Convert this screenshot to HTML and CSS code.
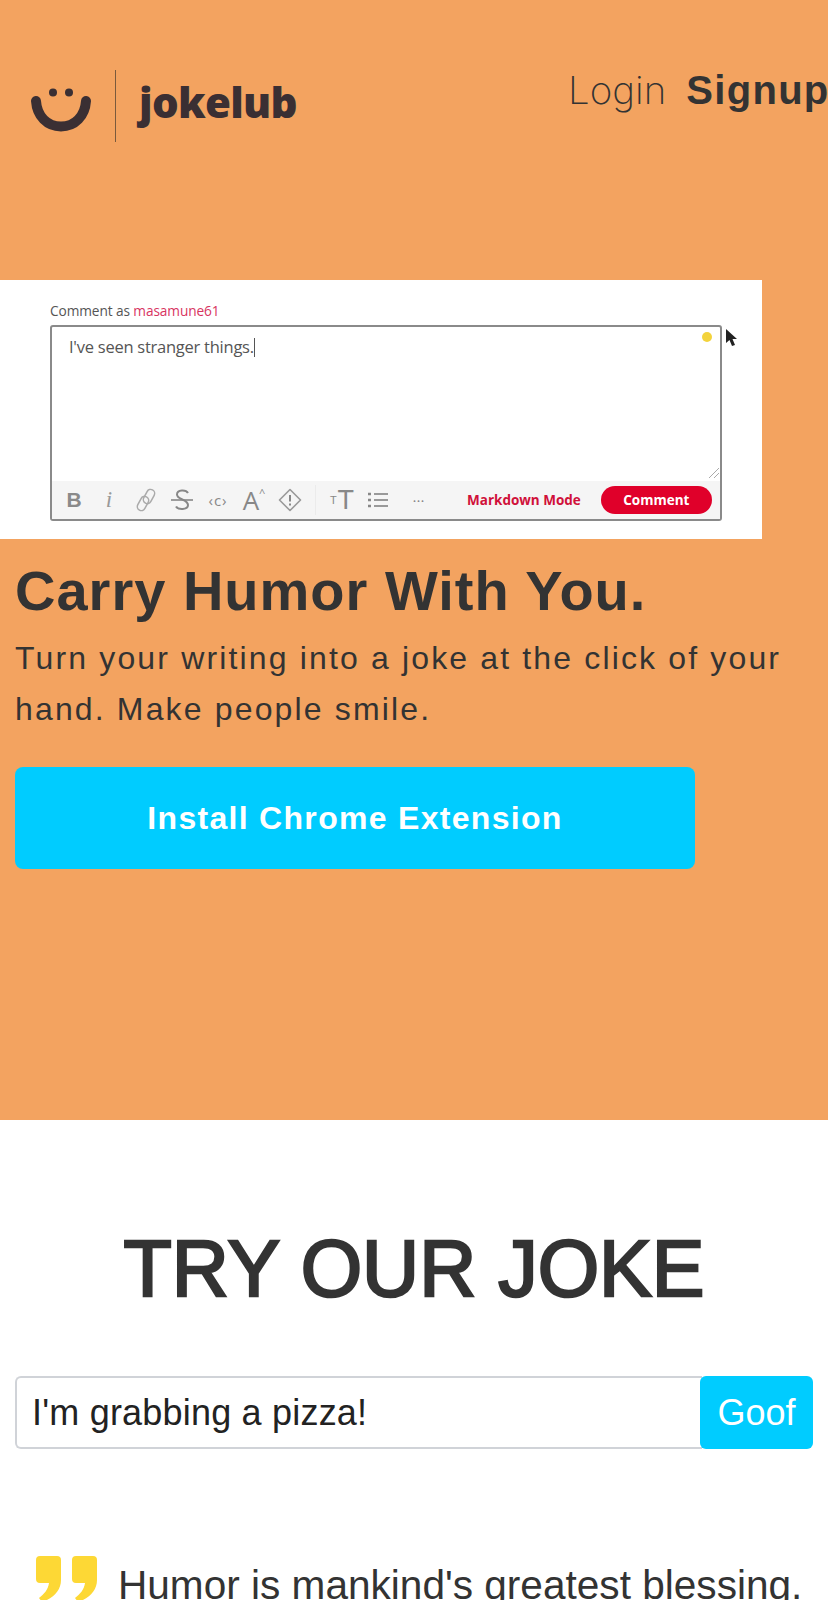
FILE: index.html
```html
<!DOCTYPE html>
<html lang="en">
<head>
<meta charset="utf-8">
<title>jokelub</title>
<link rel="stylesheet" href="styles.css">
</head>
<body>
<section class="hero">
  <header class="topbar">
    <a class="brand">
      <svg class="smile" width="62" height="48" viewBox="0 0 62 48" aria-hidden="true">
        <circle cx="22" cy="8.500" r="4" fill="#3a2f33"/>
        <circle cx="38" cy="8.500" r="4" fill="#3a2f33"/>
        <path d="M5 17 C6 32 16 42.500 30 42.500 C44 42.500 54 32 55 17" fill="none" stroke="#3a2f33" stroke-width="10" stroke-linecap="round"/>
      </svg>
      <span class="brand-rule"></span>
      <span class="brand-name">jokelub</span>
    </a>
    <nav class="nav"><a class="nav-login">Login</a><a class="nav-signup">Signup</a></nav>
  </header>

  <div class="shot">
    <p class="shot-label">Comment as <span class="shot-user">masamune61</span></p>
    <div class="editor">
      <span class="dot"></span>
      <p class="editor-text">I've seen stranger things.<span class="caret"></span></p>
      <svg class="grip" width="12" height="12" viewBox="0 0 12 12" aria-hidden="true"><path d="M1 11 L11 1 M6 11 L11 6" stroke="#aaa" stroke-width="1" fill="none"/></svg>
      <div class="toolbar">
        <span class="tool tool-b">B</span>
        <span class="tool tool-i">i</span>
        <span class="tool tool-link"><svg width="20" height="26" viewBox="0 0 20 26" aria-hidden="true"><g fill="none" stroke="#aaa" stroke-width="1.500"><rect x="-4" y="-7.500" width="8" height="15" rx="4" transform="translate(7 16.500) rotate(28)"/><rect x="-4" y="-7.500" width="8" height="15" rx="4" transform="translate(13 9.500) rotate(28)"/></g></svg></span>
        <span class="tool"><svg width="22" height="24" viewBox="0 0 22 24" aria-hidden="true"><path d="M17 5 C15 1.500 6 1.500 6 6.500 C6 12 17 11 17 17 C17 22 7 22 5 18.500" fill="none" stroke="#888" stroke-width="2"/><path d="M0 12 H22" stroke="#888" stroke-width="1.600"/></svg></span>
        <span class="tool tool-code">‹c›</span>
        <span class="tool tool-a">A<sup class="tool-sup">^</sup></span>
        <span class="tool"><svg width="24" height="24" viewBox="0 0 24 24" aria-hidden="true"><path d="M12 1.500 L22.500 12 L12 22.500 L1.500 12 Z" fill="none" stroke="#999" stroke-width="1.600" stroke-linejoin="round"/><path d="M12 7 V13.500 M12 15.500 V17.500" stroke="#888" stroke-width="2"/></svg></span>
        <span class="tool-sep"></span>
        <span class="tool tool-tt"><small class="tool-small">T</small>T</span>
        <span class="tool"><svg width="20" height="18" viewBox="0 0 20 18" aria-hidden="true"><path d="M6 3 H20 M6 9 H20 M6 15 H20" stroke="#999" stroke-width="1.800"/><path d="M0 3 H3 M0 9 H3 M0 15 H3" stroke="#888" stroke-width="2.600"/></svg></span>
        <span class="tool tool-more">•••</span>
        <span class="md-mode">Markdown Mode</span>
        <span class="comment-btn">Comment</span>
      </div>
    </div>
    <svg class="pointer" width="14" height="22" viewBox="0 0 14 22" aria-hidden="true"><path d="M1 1 L1 15 L4.500 12 L7 18 L10 17 L7.500 11 L12 11 Z" fill="#222"/></svg>
  </div>

  <div class="hero-copy">
    <h1 class="hero-title">Carry Humor With You.</h1>
    <p class="hero-text">Turn your writing into a joke at the click of your hand. Make people smile.</p>
    <a class="install">Install Chrome Extension</a>
  </div>
</section>

<section class="try">
  <h2 class="try-title">TRY OUR JOKE</h2>
  <form class="goof-form">
    <input class="goof-input" type="text" value="I'm grabbing a pizza!">
    <button class="goof-btn" type="button">Goof</button>
  </form>
  <blockquote class="quote">
    <svg class="quote-mark" width="61" height="46" viewBox="0 0 61 46" aria-hidden="true">
      <path d="M4 0 H21 Q25 0 25 4 V24 C25 34 18 42 6 46 L3 42 C8 38 12 34 13 27 H4 Q0 27 0 23 V4 Q0 0 4 0 Z" fill="#fdd835"/>
      <path d="M40 0 H57 Q61 0 61 4 V24 C61 34 54 42 42 46 L39 42 C44 38 48 34 49 27 H40 Q36 27 36 23 V4 Q36 0 40 0 Z" fill="#fdd835"/>
    </svg>
    <p class="quote-text">Humor is mankind's greatest blessing.</p>
  </blockquote>
</section>
</body>
</html>
```
FILE: styles.css
```css
* { box-sizing: border-box; }
html, body { margin: 0; padding: 0; overflow-x: hidden; }
body { width: 828px; height: 1600px; overflow: hidden; background: #fff; color: #333; font-family: "Liberation Sans", Arial, sans-serif; }
p, h1, h2, blockquote { margin: 0; }

.hero { height: 1120px; background: #f3a360; padding-top: 70px; }
.topbar { display: flex; height: 72px; padding-left: 31px; margin-bottom: 138px; width: 828px; }
.brand { display: flex; align-items: center; height: 72px; width: 537px; flex: none; }
.smile { margin-top: 3px; flex: none; }
.brand-rule { flex: none; width: 1px; height: 72px; background: #7a5a3c; margin: 0 22px; }
.brand-name { font-family: "Open Sans", sans-serif; font-weight: 800; font-size: 42px; letter-spacing: -.7px; color: #3a2f33; line-height: 1; margin: -8px 0 0 1px; }
.nav { display: flex; align-items: baseline; gap: 20px; line-height: 46px; margin-top: -3px; white-space: nowrap; flex: none; }
.nav-login { font-family: Inter, sans-serif; font-weight: 200; font-size: 38.500px; color: #333; }
.nav-signup { font-weight: 700; letter-spacing: 1.300px; font-size: 40px; color: #333; }

.shot { position: relative; width: 762px; height: 259px; background: #fff; padding: 23px 0 0 50px; font-family: "Open Sans", sans-serif; }
.shot-label { font-size: 13.700px; line-height: 15px; color: #555; letter-spacing: -.1px; }
.shot-user { color: #d8345f; }
.editor { position: relative; width: 672px; height: 196px; margin-top: 7px; border: 2px solid #8a8a8a; border-radius: 3px; display: flex; flex-direction: column; justify-content: space-between; }
.editor-text { padding: 9px 0 0 17px; font-size: 16.500px; line-height: 22px; color: #555; letter-spacing: -.25px; }
.caret { display: inline-block; width: 1px; height: 19px; background: #555; vertical-align: -4px; }
.dot { position: absolute; right: 8px; top: 5px; width: 10px; height: 10px; border-radius: 50%; background: #f3d33c; }
.grip { position: absolute; right: 0; bottom: 40px; }
.pointer { position: absolute; left: 725px; top: 48px; }
.toolbar { display: flex; align-items: center; height: 38px; background: #f5f5f5; color: #999; }
.tool { flex: none; width: 36px; text-align: center; display: flex; justify-content: center; align-items: center; }
.tool-b { font-family: "Liberation Sans", sans-serif; font-weight: 700; font-size: 21px; width: 44px; color: #8a8a8a; }
.tool-i { font-family: "Liberation Serif", serif; font-style: italic; font-size: 23px; width: 26px; }
.tool-link { margin-left: 6px; }
.tool-code { font-size: 15px; letter-spacing: 1px; color: #888; }
.tool-a { font-size: 26px; color: #888; line-height: 1; }
.tool-sup { font-size: 11px; align-self: flex-start; line-height: 1; }
.tool-sep { flex: none; width: 1px; height: 30px; background: #ebebeb; margin: 0 8px 0 7px; }
.tool-tt { font-size: 27px; color: #888; font-family: "Liberation Sans", sans-serif; }
.tool-small { font-size: 11px; margin-right: 1px; }
.tool-more { font-size: 8px; letter-spacing: 1px; width: 42px; margin-left: 2px; color: #888; }
.md-mode { flex: none; margin-left: 27px; font-size: 13.500px; font-weight: 700; color: #d0103a; white-space: nowrap; }
.comment-btn { flex: none; width: 111px; height: 28px; line-height: 28px; margin-left: 20px; border-radius: 14px; background: #e0002a; color: #fff; font-size: 13.500px; font-weight: 700; text-align: center; }

.hero-copy { padding: 20px 15px 0; }
.hero-title { font-size: 56px; line-height: 64px; font-weight: 700; letter-spacing: 1px; color: #333; }
.hero-text { font-size: 32px; line-height: 51px; letter-spacing: 2.150px; color: #333; margin-top: 10px; width: 790px; }
.install { display: block; width: 680px; height: 102px; margin-top: 32px; border-radius: 8px; background: #00ccff; color: #fff; font-size: 32px; font-weight: 700; line-height: 102px; text-align: center; letter-spacing: 1.300px; }

.try { padding: 103px 15px 0; }
.try-title { font-size: 79px; line-height: 92px; font-weight: 400; text-align: center; color: #333; -webkit-text-stroke: 2.500px #333; }
.goof-form { display: flex; margin-top: 61px; height: 73px; }
.goof-input { flex: 1; min-width: 0; height: 73px; border: 2px solid #d0d3d8; border-right: 0; border-radius: 6px 0 0 6px; padding: 0 15px; font: 36px "Liberation Sans", sans-serif; color: #222; background: #fff; outline: 0; letter-spacing: .2px; }
.goof-btn { flex: none; width: 113px; height: 73px; border: 0; border-radius: 6px; background: #00ccff; color: #fff; font: 36px "Liberation Sans", sans-serif; padding: 0; margin-left: -2px; }
.quote { display: flex; gap: 21px; margin: 107px 0 0 21px; align-items: flex-start; }
.quote-mark { flex: none; }
.quote-text { font-size: 40.600px; line-height: 48px; padding-top: 5px; white-space: nowrap; color: #333; }
```
